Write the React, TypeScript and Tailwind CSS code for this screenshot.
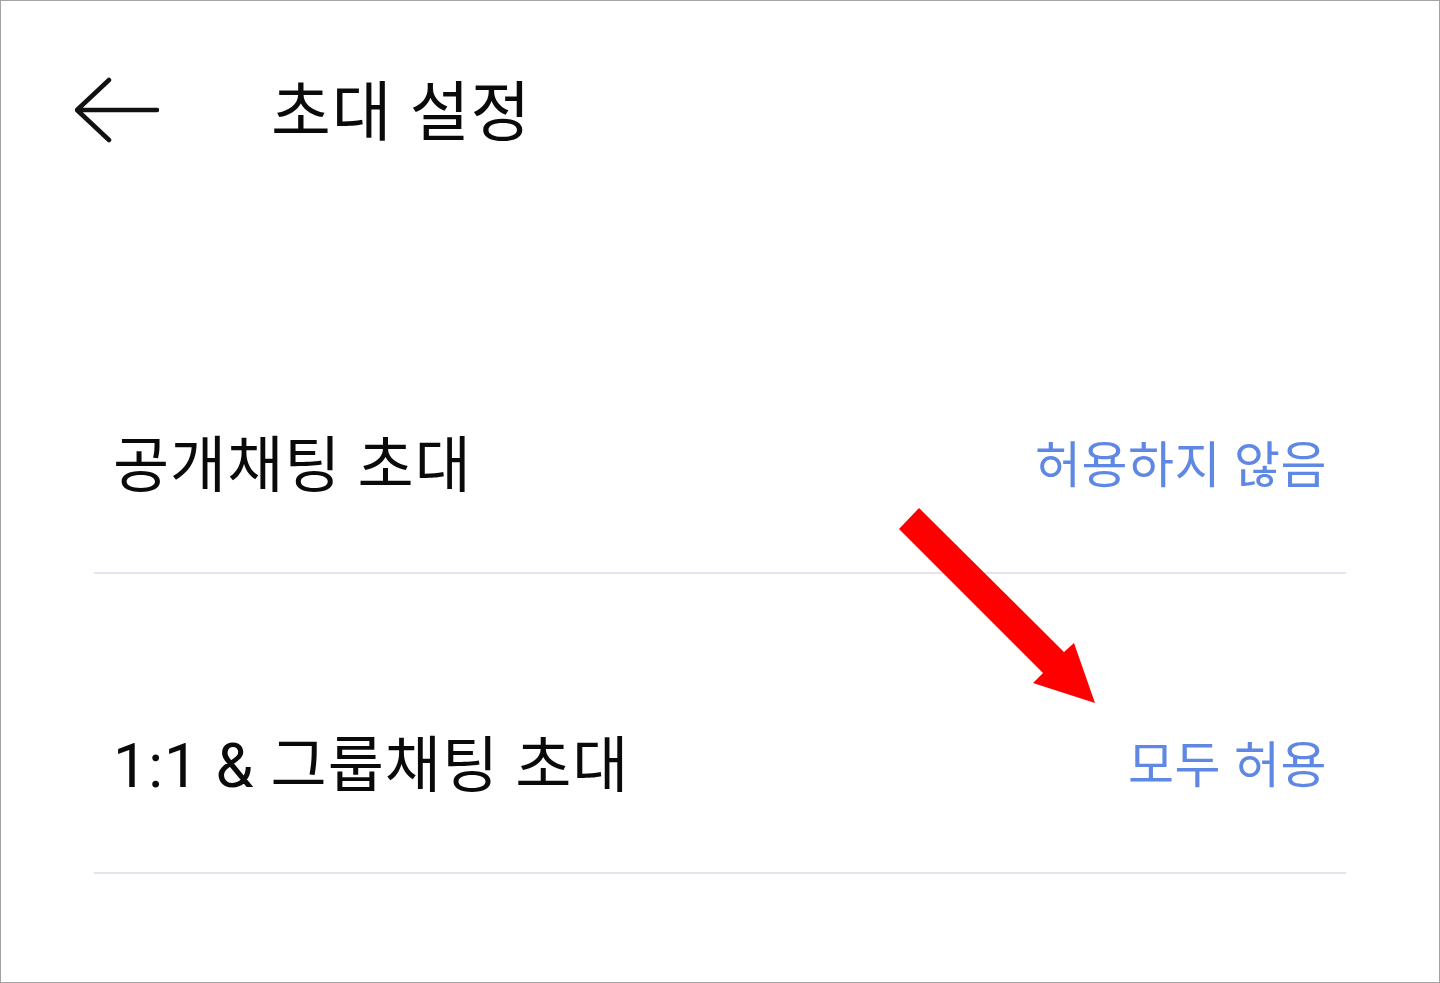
import { ReactNode } from 'react';

// 초대 설정 화면: 헤더 + 두 개의 설정 행, 주석용 빨간 화살표
const FONT = "font-['Roboto','Noto_Sans_CJK_KR',sans-serif]";

function BackArrow() {
  return (
    <svg width="84" height="66" viewBox="0 0 84 66" fill="none" className="shrink-0">
      <path
        d="M34 3 L2 33 L34 63 M2 33 H82"
        stroke="#111"
        strokeWidth="4.5"
        strokeLinecap="round"
        strokeLinejoin="round"
      />
    </svg>
  );
}

function Row({ label, value }: { label: ReactNode; value: string }) {
  return (
    <div className="flex h-[300px] items-end justify-between border-b-2 border-[#e4e4ec] px-[19px] pb-[71px]">
      <span className="text-[61px] leading-[70px] tracking-[1px] text-[#0a0a0a]">{label}</span>
      <span className="text-[50px] leading-[70px] tracking-[0.5px] text-[#5f88e4]">{value}</span>
    </div>
  );
}

export default function App() {
  return (
    <div className={`relative h-[983px] w-[1440px] overflow-hidden border border-[#a3a3a3] bg-white ${FONT}`}>
      {/* 헤더 */}
      <div className="flex h-[217px] items-center pl-[74px]">
        <BackArrow />
        <h1 className="ml-[112px] mt-[8px] text-[65px] font-normal leading-none tracking-[1px] text-[#0a0a0a]">초대 설정</h1>
      </div>

      {/* 설정 목록 */}
      <div className="mx-[93px] pt-[56px]">
        <Row label="공개채팅 초대" value="허용하지 않음" />
        <Row label="1:1 & 그룹채팅 초대" value="모두 허용" />
      </div>

      {/* 주석 화살표 */}
      <svg className="pointer-events-none absolute inset-0" width="1440" height="983" viewBox="0 0 1440 983">
        <polygon
          points="918,507 1063,651 1073,642 1094,702 1032,682 1042,672 898,528"
          fill="#ff0000"
        />
      </svg>
    </div>
  );
}
